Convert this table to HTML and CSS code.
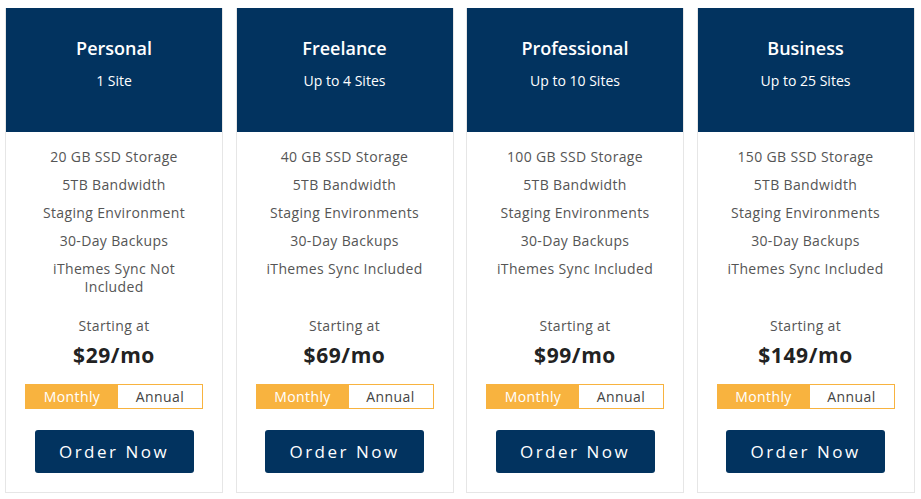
FILE: index.html
```html
<!DOCTYPE html>
<html>
<head>
<meta charset="utf-8">
<link rel="stylesheet" href="styles.css">
</head>
<body>
<div class="plans">
  <div class="card">
    <div class="head"><h2>Personal</h2><p>1 Site</p></div>
    <ul class="features">
      <li>20 GB SSD Storage</li>
      <li>5TB Bandwidth</li>
      <li>Staging Environment</li>
      <li>30-Day Backups</li>
      <li>iThemes Sync Not Included</li>
    </ul>
    <div class="start">Starting at</div>
    <div class="price">$29/mo</div>
    <div class="toggle"><span class="on">Monthly</span><span class="off">Annual</span></div>
    <a class="order">Order Now</a>
  </div>
  <div class="card">
    <div class="head"><h2>Freelance</h2><p>Up to 4 Sites</p></div>
    <ul class="features">
      <li>40 GB SSD Storage</li>
      <li>5TB Bandwidth</li>
      <li>Staging Environments</li>
      <li>30-Day Backups</li>
      <li>iThemes Sync Included</li>
    </ul>
    <div class="start">Starting at</div>
    <div class="price">$69/mo</div>
    <div class="toggle"><span class="on">Monthly</span><span class="off">Annual</span></div>
    <a class="order">Order Now</a>
  </div>
  <div class="card">
    <div class="head"><h2>Professional</h2><p>Up to 10 Sites</p></div>
    <ul class="features">
      <li>100 GB SSD Storage</li>
      <li>5TB Bandwidth</li>
      <li>Staging Environments</li>
      <li>30-Day Backups</li>
      <li>iThemes Sync Included</li>
    </ul>
    <div class="start">Starting at</div>
    <div class="price">$99/mo</div>
    <div class="toggle"><span class="on">Monthly</span><span class="off">Annual</span></div>
    <a class="order">Order Now</a>
  </div>
  <div class="card">
    <div class="head"><h2>Business</h2><p>Up to 25 Sites</p></div>
    <ul class="features">
      <li>150 GB SSD Storage</li>
      <li>5TB Bandwidth</li>
      <li>Staging Environments</li>
      <li>30-Day Backups</li>
      <li>iThemes Sync Included</li>
    </ul>
    <div class="start">Starting at</div>
    <div class="price">$149/mo</div>
    <div class="toggle"><span class="on">Monthly</span><span class="off">Annual</span></div>
    <a class="order">Order Now</a>
  </div>
</div>
</body>
</html>
```
FILE: styles.css
```css
html, body { margin: 0; padding: 0; background: #ffffff; }
body { font-family: "Open Sans", "Liberation Sans", sans-serif; color: #555; }
.plans {
  display: flex;
  gap: 12.5px;
  padding: 8px 0 0 5px;
}
.card {
  width: 218px;
  height: 485px;
  box-sizing: border-box;
  border: 1px solid #e6e6e6;
  border-top: none;
  display: flex;
  flex-direction: column;
  align-items: center;
  padding-bottom: 19px;
}
.head {
  align-self: stretch;
  height: 124px;
  background: #02335f;
  color: #fff;
  text-align: center;
  padding-top: 28px;
  box-sizing: border-box;
}
.head h2 {
  margin: 0;
  font-size: 18px;
  font-weight: 600;
  line-height: 24px;
}
.head p {
  margin: 12px 0 0;
  font-size: 14px;
  line-height: 18px;
}
.features {
  flex: 1;
  list-style: none;
  margin: 16px 0 0;
  padding: 0 24px;
  text-align: center;
  font-size: 14px;
  letter-spacing: 0.35px;
  line-height: 18px;
  color: #555;
}
.features li { margin-bottom: 10px; }
.start {
  font-size: 14px;
  letter-spacing: 0.35px;
  line-height: 18px;
  color: #555;
}
.price {
  margin-top: 7px;
  font-size: 21px;
  font-weight: 700;
  letter-spacing: 0.6px;
  color: #222;
  line-height: 26px;
}
.toggle {
  margin-top: 16px;
  display: flex;
  width: 178px;
  height: 25px;
  box-sizing: border-box;
  border: 1px solid #f8b33f;
  font-size: 14px;
  letter-spacing: 0.4px;
}
.toggle span { display: flex; align-items: center; justify-content: center; }
.toggle .on { width: 92px; background: #f8b33f; color: #fff; }
.toggle .off { flex: 1; background: #fff; color: #444; }
.order {
  margin-top: 21px;
  width: 159px;
  height: 43px;
  flex: none;
  border-radius: 3px;
  background: #02335f;
  color: #fff;
  display: flex;
  align-items: center;
  justify-content: center;
  font-size: 17px;
  letter-spacing: 2.5px;
}
```
